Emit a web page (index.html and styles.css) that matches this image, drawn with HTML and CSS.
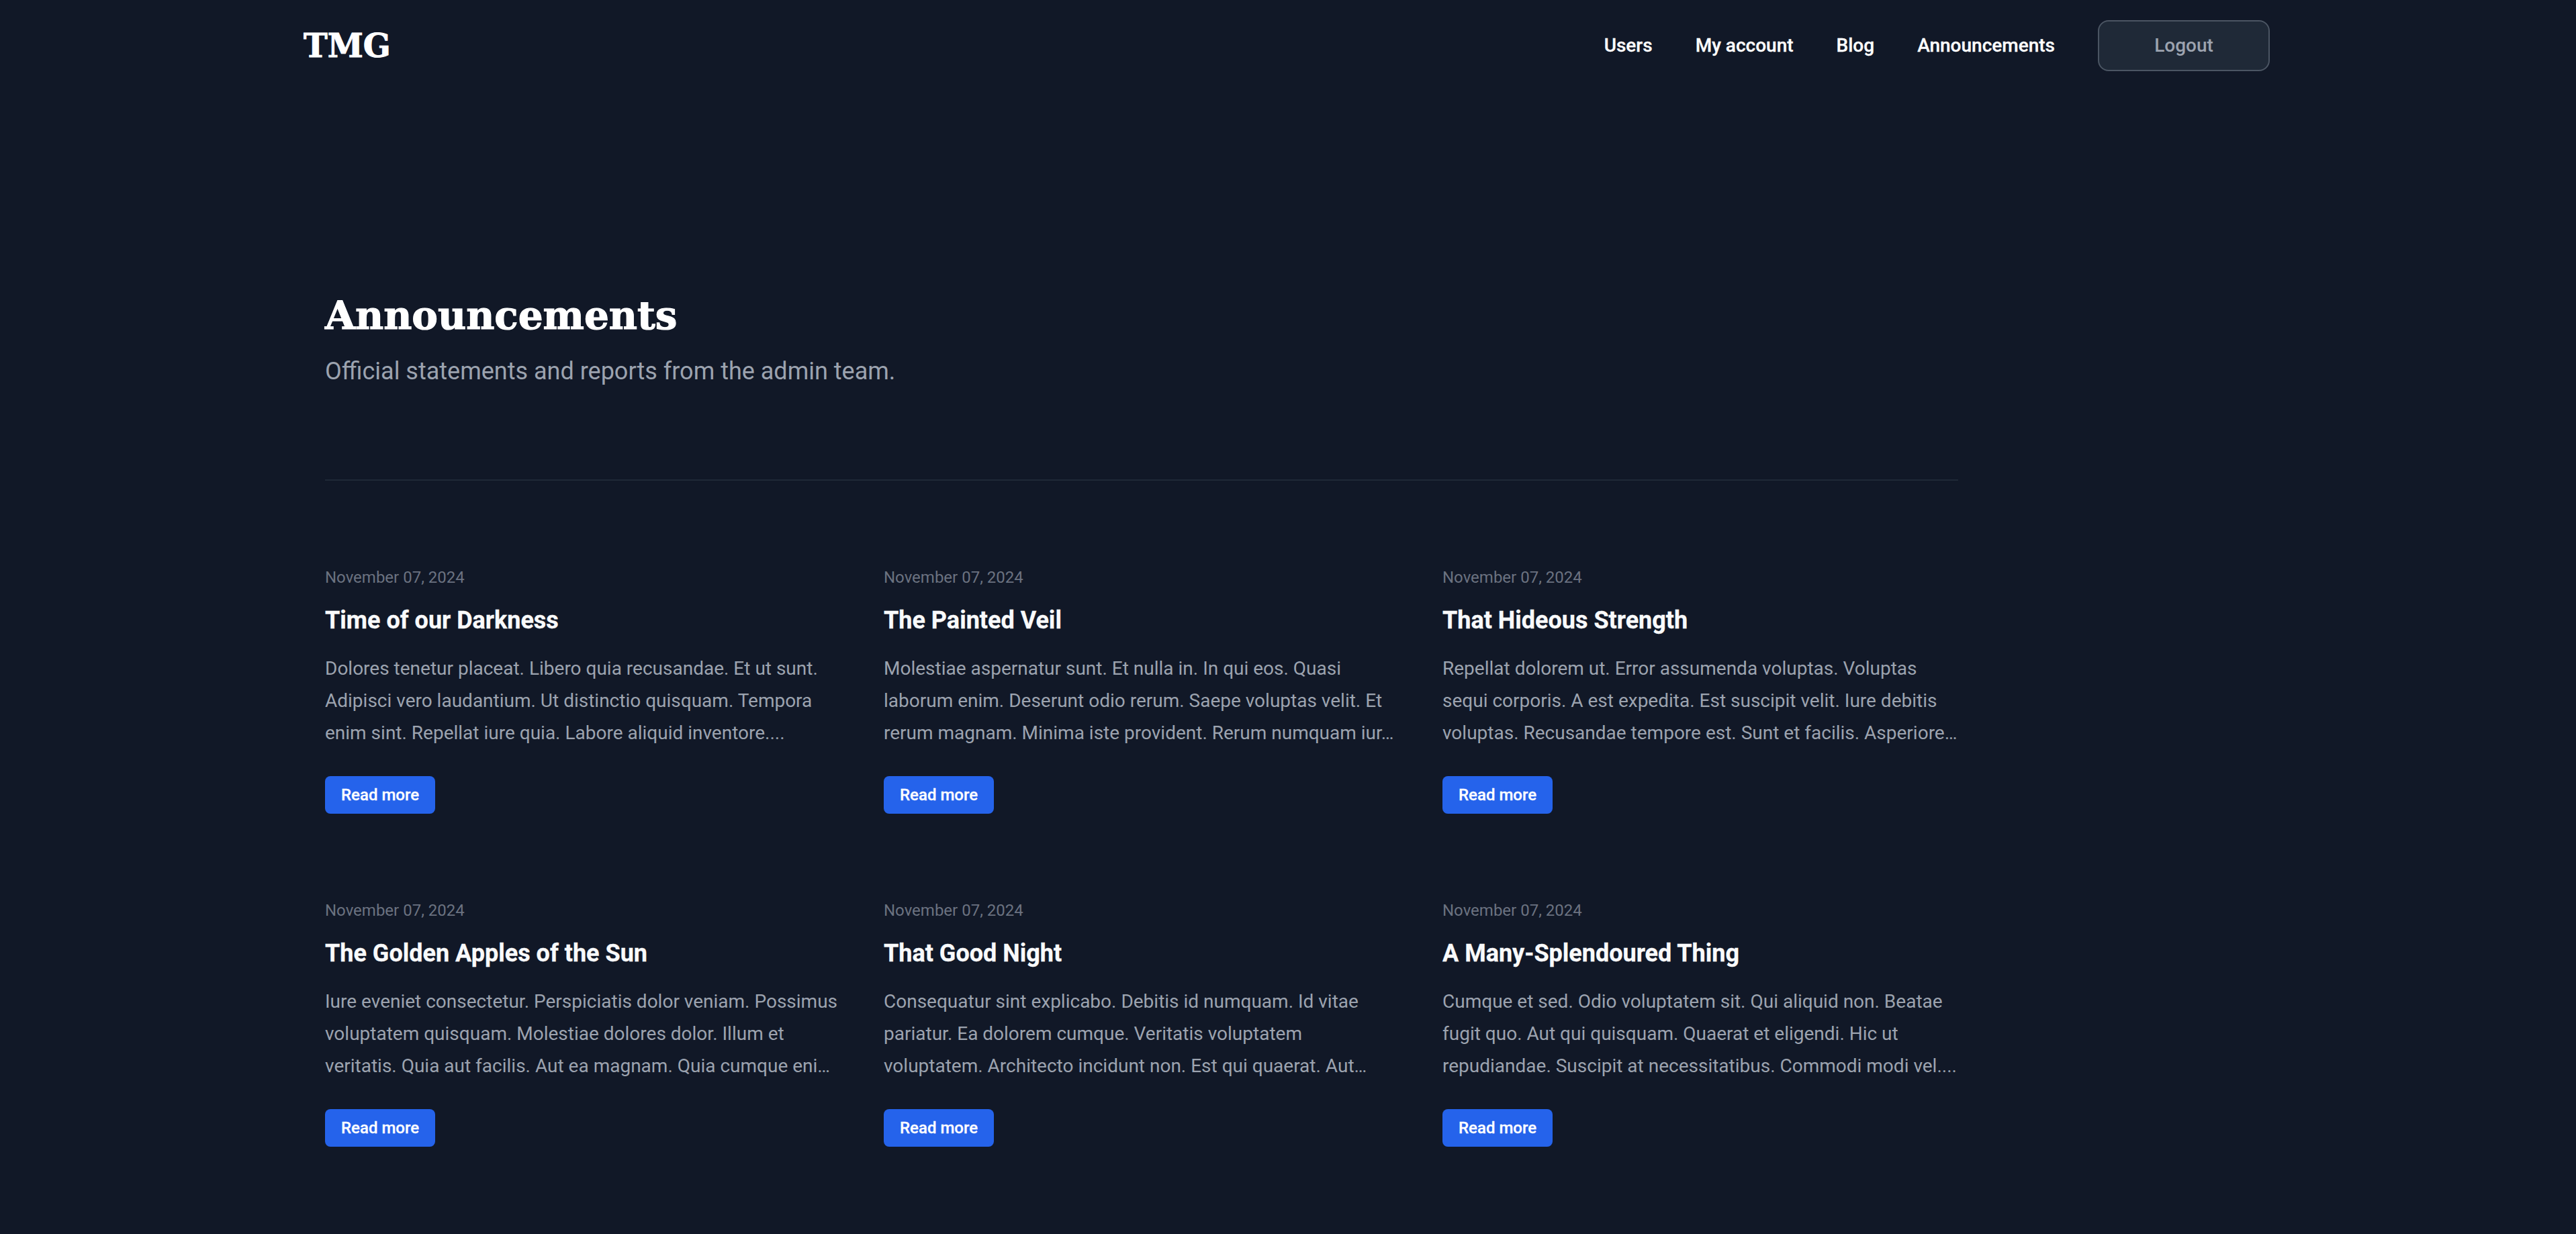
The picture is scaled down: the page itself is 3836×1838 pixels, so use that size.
FILE: index.html
```html
<!DOCTYPE html>
<html lang="en">
<head>
<meta charset="utf-8">
<title>Announcements</title>
<link rel="stylesheet" href="styles.css">
</head>
<body>
<header class="topbar">
  <a class="logo" href="#">TMG</a>
  <nav class="nav">
    <a href="#">Users</a>
    <a href="#">My account</a>
    <a href="#">Blog</a>
    <a href="#">Announcements</a>
    <button class="logout">Logout</button>
  </nav>
</header>
<main class="main">
  <section class="intro">
    <h1>Announcements</h1>
    <p>Official statements and reports from the admin team.</p>
  </section>
  <section class="grid">
    <article class="card">
      <time>November 07, 2024</time>
      <h2>Time of our Darkness</h2>
      <p>Dolores tenetur placeat. Libero quia recusandae. Et ut sunt. Adipisci vero laudantium. Ut distinctio quisquam. Tempora enim sint. Repellat iure quia. Labore aliquid inventore....</p>
      <a class="more" href="#">Read more</a>
    </article>
    <article class="card">
      <time>November 07, 2024</time>
      <h2>The Painted Veil</h2>
      <p>Molestiae aspernatur sunt. Et nulla in. In qui eos. Quasi laborum enim. Deserunt odio rerum. Saepe voluptas velit. Et rerum magnam. Minima iste provident. Rerum numquam iur…</p>
      <a class="more" href="#">Read more</a>
    </article>
    <article class="card">
      <time>November 07, 2024</time>
      <h2>That Hideous Strength</h2>
      <p>Repellat dolorem ut. Error assumenda voluptas. Voluptas sequi corporis. A est expedita. Est suscipit velit. Iure debitis voluptas. Recusandae tempore est. Sunt et facilis. Asperiore…</p>
      <a class="more" href="#">Read more</a>
    </article>
    <article class="card">
      <time>November 07, 2024</time>
      <h2>The Golden Apples of the Sun</h2>
      <p>Iure eveniet consectetur. Perspiciatis dolor veniam. Possimus voluptatem quisquam. Molestiae dolores dolor. Illum et veritatis. Quia aut facilis. Aut ea magnam. Quia cumque eni…</p>
      <a class="more" href="#">Read more</a>
    </article>
    <article class="card">
      <time>November 07, 2024</time>
      <h2>That Good Night</h2>
      <p>Consequatur sint explicabo. Debitis id numquam. Id vitae pariatur. Ea dolorem cumque. Veritatis voluptatem voluptatem. Architecto incidunt non. Est qui quaerat. Aut…</p>
      <a class="more" href="#">Read more</a>
    </article>
    <article class="card">
      <time>November 07, 2024</time>
      <h2>A Many-Splendoured Thing</h2>
      <p>Cumque et sed. Odio voluptatem sit. Qui aliquid non. Beatae fugit quo. Aut qui quisquam. Quaerat et eligendi. Hic ut repudiandae. Suscipit at necessitatibus. Commodi modi vel....</p>
      <a class="more" href="#">Read more</a>
    </article>
  </section>
</main>
</body>
</html>
```
FILE: styles.css
```css
* { box-sizing: border-box; }
html, body { margin: 0; height: 100%; }
body {
  background: #111827;
  color: #fff;
  font-family: Roboto, "Liberation Sans", sans-serif;
  overflow: hidden;
}
a { color: inherit; text-decoration: none; }
.topbar {
  width: 2928px;
  height: 136px;
  margin-left: 452px;
  display: flex;
  align-items: center;
  justify-content: space-between;
}
.logo {
  font-family: "DejaVu Serif", serif;
  font-weight: 700;
  font-size: 48px;
  line-height: 48px;
  -webkit-text-stroke: 1px #fff;
}
.nav { display: flex; align-items: center; gap: 64px; font-size: 28px; font-weight: 500; }
.nav a { margin-bottom: 2px; -webkit-text-stroke: 0.3px #fff; }
.logout {
  width: 256px;
  height: 76px;
  padding-bottom: 2px;
  background: #1f2937;
  border: 2px solid #4b5563;
  border-radius: 16px;
  color: #9ca3af;
  font: inherit;
}
.main { margin-left: 484px; width: 2432px; padding-top: 302px; }
.intro { padding-bottom: 133px; border-bottom: 2px solid #1f2937; }
.intro h1 {
  margin: 0;
  font-family: "DejaVu Serif", serif;
  font-weight: 700;
  font-size: 58px;
  line-height: 64px;
  -webkit-text-stroke: 1.2px #fff;
}
.intro p { margin: 23px 0 0; font-size: 36px; line-height: 56px; color: #9ca3af; }
.grid {
  display: grid;
  grid-template-columns: repeat(3, 768px);
  column-gap: 64px;
  row-gap: 128px;
  margin-top: 128px;
}
.card { display: flex; flex-direction: column; align-items: flex-start; }
.card time { font-size: 24px; line-height: 32px; color: #6b7280; }
.card h2 { margin: 20px 0 0; font-size: 36px; font-weight: 700; line-height: 56px; color: #f9fafb; -webkit-text-stroke: 0.3px #f9fafb; }
.card p {
  margin: 20px 0 0;
  font-size: 28px;
  line-height: 48px;
  color: #9ca3af;
}
.more {
  margin-top: 40px;
  height: 56px;
  padding: 0 24px;
  display: flex;
  align-items: center;
  background: #2563eb;
  border-radius: 8px;
  font-size: 24px;
  font-weight: 500;
  -webkit-text-stroke: 0.3px #fff;
}
```
